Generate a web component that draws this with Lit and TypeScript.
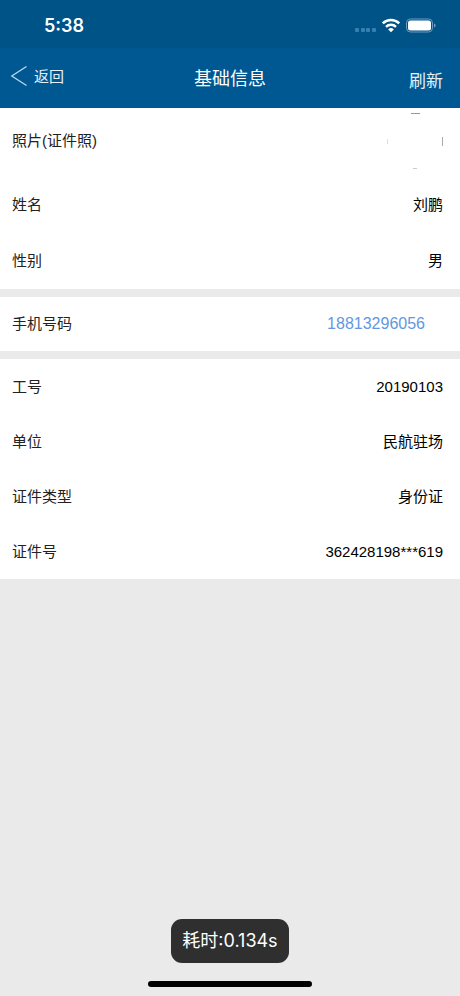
import { LitElement, html, css, nothing } from "lit";
import { customElement, property } from "lit/decorators.js";

interface Field {
  label: string;
  value?: string;
  kind?: "photo" | "phone";
}

const GROUPS: Field[][] = [
  [
    { label: "照片(证件照)", kind: "photo" },
    { label: "姓名", value: "刘鹏" },
    { label: "性别", value: "男" },
  ],
  [{ label: "手机号码", value: "18813296056", kind: "phone" }],
  [
    { label: "工号", value: "20190103" },
    { label: "单位", value: "民航驻场" },
    { label: "证件类型", value: "身份证" },
    { label: "证件号", value: "362428198***619" },
  ],
];

@customElement("status-bar")
export class StatusBar extends LitElement {
  static styles = css`
    :host {
      display: flex;
      align-items: center;
      justify-content: space-between;
      height: 48px;
      padding: 4px 24px 0 44px;
      box-sizing: border-box;
      background: #005387;
      color: #fff;
    }
    .time {
      font: 600 18px/24px Inter, sans-serif;
    }
    .icons {
      display: block;
    }
  `;

  render() {
    return html`
      <span class="time">5:38</span>
      <svg class="icons" width="81" height="18" viewBox="0 0 81 18" aria-hidden="true">
        <g fill="#3580b1">
          <rect x="0" y="11" width="4" height="4" rx="1" />
          <rect x="6" y="11" width="4" height="4" rx="1" />
          <rect x="11" y="11" width="4" height="4" rx="1" />
          <rect x="17" y="11" width="4" height="4" rx="1" />
        </g>
        <g fill="none" stroke="#fff" stroke-width="2.5">
          <path d="M27.8 6.300a11.800 11.800 0 0 1 16.400 0" />
          <path d="M31 9.800a7.200 7.200 0 0 1 10 0" />
        </g>
        <path d="M33.200 12.400a4.100 4.100 0 0 1 5.600 0L36 15.200z" fill="#fff" />
        <rect x="51.500" y="2" width="26" height="13" rx="4" fill="none" stroke="#6c9dbf" />
        <rect x="53" y="3.500" width="23" height="10" rx="2.500" fill="#fff" />
        <path d="M79 6.500v4c1-.3 1.600-1.100 1.600-2s-.6-1.700-1.600-2z" fill="#6c9dbf" />
      </svg>
    `;
  }
}

@customElement("nav-bar")
export class NavBar extends LitElement {
  static styles = css`
    :host {
      display: grid;
      grid-template-columns: 1fr auto 1fr;
      align-items: center;
      height: 60px;
      background: #005892;
      color: #fff;
    }
    button {
      display: flex;
      align-items: center;
      gap: 6px;
      margin: 0;
      padding: 0;
      border: 0;
      background: none;
      color: #e6f1f8;
      font-family: inherit;
      cursor: pointer;
    }
    .back {
      justify-self: start;
      font-size: 15px;
      line-height: 24px;
      padding: 0 0 2px 10px;
    }
    .refresh {
      justify-self: end;
      font-size: 17px;
      line-height: 24px;
      padding: 8px 17px 0 0;
    }
    h1 {
      margin: 0;
      padding-top: 2px;
      font-size: 18px;
      line-height: 24px;
      font-weight: 400;
    }
  `;

  render() {
    return html`
      <button class="back">
        <svg width="18" height="22" viewBox="0 0 18 22" aria-hidden="true">
          <path d="M16.500 0.500L1.800 10 16.500 19.500" fill="none" stroke="#b9d7ec" stroke-width="1.300" />
        </svg>
        返回
      </button>
      <h1>基础信息</h1>
      <button class="refresh">刷新</button>
    `;
  }
}

@customElement("info-row")
export class InfoRow extends LitElement {
  @property({ attribute: false }) field!: Field;

  static styles = css`
    :host {
      display: flex;
      align-items: center;
      justify-content: space-between;
      padding: 0 17px 0 12px;
      font-size: 15px;
      line-height: 24px;
    }
    .label {
      color: #222;
    }
    .value {
      color: #000;
    }
    .phone {
      margin-right: 18px;
      font-size: 16px;
      color: #6298e0;
      text-decoration: none;
    }
    .photo {
      display: block;
    }
  `;

  private renderValue() {
    const { kind, value } = this.field;
    if (kind === "photo") {
      return html`<svg class="photo" width="56" height="58" viewBox="0 0 56 58" role="img" aria-label="证件照">
        <path d="M24 1.500h9" stroke="#999" />
        <path d="M.5 27v5" stroke="#ddd" />
        <path d="M55.500 25v9" stroke="#aaa" />
        <path d="M26 56.500h4" stroke="#ccc" />
      </svg>`;
    }
    if (kind === "phone") {
      return html`<a class="phone" href="tel:${value}">${value}</a>`;
    }
    return html`<span class="value">${value}</span>`;
  }

  render() {
    if (!this.field) return nothing;
    return html`<span class="label">${this.field.label}</span>${this.renderValue()}`;
  }
}

@customElement("app-root")
export class AppRoot extends LitElement {
  static styles = css`
    :host {
      display: block;
      min-height: 100vh;
      background: #eaeaea;
      font-family: "Liberation Sans", "Noto Sans CJK SC", sans-serif;
    }
    .groups {
      display: flex;
      flex-direction: column;
      gap: 8px;
    }
    .group {
      background: #fff;
    }
    .row {
      min-height: 55px;
    }
    .group:first-child .row {
      min-height: 56px;
    }
    .group:first-child .row:first-child {
      min-height: 66px;
      padding-bottom: 3px;
    }
    .group:nth-child(2) .row {
      min-height: 54px;
    }
    .overlay {
      position: fixed;
      left: 0;
      right: 0;
      bottom: 9px;
      display: flex;
      flex-direction: column;
      align-items: center;
      gap: 18px;
      pointer-events: none;
    }
    .toast {
      padding: 10px 11px;
      border-radius: 11px;
      background: #2f2f2f;
      color: #fff;
      font-family: Inter, "Noto Sans CJK SC", sans-serif;
      font-size: 18px;
      line-height: 24px;
    }
    .home {
      width: 164px;
      height: 6px;
      border-radius: 3px;
      background: #000;
    }
  `;

  render() {
    return html`
      <status-bar></status-bar>
      <nav-bar></nav-bar>
      <main class="groups">
        ${GROUPS.map(
          (group) => html`<section class="group">
            ${group.map((field) => html`<info-row class="row" .field=${field}></info-row>`)}
          </section>`
        )}
      </main>
      <div class="overlay">
        <div class="toast" role="status">耗时:0.134s</div>
        <div class="home"></div>
      </div>
    `;
  }
}
